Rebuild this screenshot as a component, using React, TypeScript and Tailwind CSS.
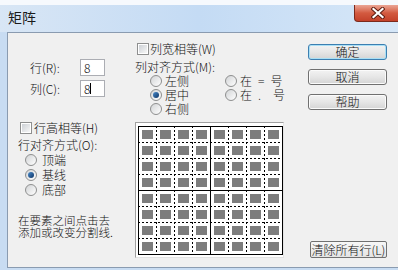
import React from "react";

function Checkbox() {
  return (
    <span className="w-[12px] h-[12px] shrink-0 border border-[#8e8f8f] bg-white p-[1px] flex">
      <span className="flex-1 bg-linear-to-br from-[#cdd1d6] to-[#f7f7f7]" />
    </span>
  );
}

function Radio({ checked }: { checked?: boolean }) {
  return (
    <span className="w-[12px] h-[12px] shrink-0 rounded-full border border-[#8e8f8f] bg-linear-to-br from-[#d2d4d6] to-[#ffffff] flex items-center justify-center">
      {checked && (
        <span className="w-[6px] h-[6px] rounded-full bg-linear-to-br from-[#4a8ccc] to-[#0f3566]" />
      )}
    </span>
  );
}

function RadioRow({ label, checked, h = "h-[15px]", gap = "gap-[5px]" }: { label: React.ReactNode; checked?: boolean; h?: string; gap?: string }) {
  return (
    <div className={`flex items-center ${h} ${gap}`}>
      <Radio checked={checked} />
      <span className="leading-[12px] whitespace-pre">{label}</span>
    </div>
  );
}

function Btn({ label, focused }: { label: string; focused?: boolean }) {
  return (
    <div
      className={
        "w-[79px] h-[16px] rounded-[3px] border flex items-center justify-center text-[12px] leading-none bg-linear-to-b from-[#f3f3f3] via-[#e6e6e6] to-[#d4d4d4] " +
        (focused
          ? "border-[#3c7fb1] shadow-[inset_0_0_0_1px_#a9dff5]"
          : "border-[#707070] shadow-[inset_0_0_0_1px_#fbfbfb]")
      }
    >
      {label}
    </div>
  );
}

function Preview() {
  const els: React.ReactNode[] = [];
  for (let i = 0; i <= 8; i++) {
    const x = i * 18 + 0.5;
    const solid = i % 4 === 0;
    els.push(
      <line key={"v" + i} x1={x} y1={0} x2={x} y2={129} stroke="#000" strokeWidth={1} strokeDasharray={solid ? undefined : "2 2"} />
    );
  }
  for (let j = 0; j <= 8; j++) {
    const y = j * 16 + 0.5;
    const solid = j % 4 === 0;
    els.push(
      <line key={"h" + j} x1={0} y1={y} x2={145} y2={y} stroke="#000" strokeWidth={1} strokeDasharray={solid ? undefined : "2 2"} />
    );
  }
  for (let i = 0; i < 8; i++) {
    for (let j = 0; j < 8; j++) {
      els.push(<rect key={`r${i}-${j}`} x={i * 18 + 4} y={j * 16 + 4} width={11} height={9} fill="#7d7d7d" />);
    }
  }
  return (
    <svg width={145} height={129} viewBox="0 0 145 129" className="block">
      {els}
    </svg>
  );
}

export default function App() {
  return (
    <div className="w-[398px] h-[270px] overflow-hidden bg-[#c8dcf2] flex flex-col font-['Noto_Sans_CJK_SC',sans-serif] font-light text-[12px] text-[#111]">
      <div className="h-[5px] bg-[#f6f9fd] shrink-0" />
      <div className="h-[27px] shrink-0 flex items-start bg-linear-to-r from-[#d8e6f5] via-[#c4dbf4] to-[#d6e7f8]">
        <span className="pl-[8px] pt-[3px] text-[14px] leading-[18px] font-normal text-[#1a1a1a]">矩阵</span>
        <div className="ml-auto mr-[-4px] w-[48px] h-[17px] rounded-bl-[4px] border border-t-0 border-[#7c2a1c] bg-linear-to-b from-[#eaa595] via-[#d35a40] to-[#c3412a] flex items-center justify-center">
          <svg width="14" height="12" viewBox="0 0 14 12">
            <path d="M2.5 2 L11.5 10 M11.5 2 L2.5 10" stroke="#5a1a10" strokeWidth="4" strokeLinecap="square" />
            <path d="M2.5 2 L11.5 10 M11.5 2 L2.5 10" stroke="#ffffff" strokeWidth="2.2" strokeLinecap="square" />
          </svg>
        </div>
      </div>
      <div className="ml-[7px] h-[236px] shrink-0 border-l border-t border-b border-[#8a9bb0] bg-[#f0f0f0] flex">
        {/* left column */}
        <div className="w-[127px] shrink-0 flex flex-col">
          <div className="mt-[26px] flex items-center h-[17px]">
            <span className="ml-[22px] w-[50px] leading-[12px]">行(R):</span>
            <div className="w-[25px] h-[17px] border border-[#abadb3] bg-white pl-[3px] flex items-center leading-[12px]">8</div>
          </div>
          <div className="mt-[4px] flex items-center h-[17px]">
            <span className="ml-[22px] w-[50px] leading-[12px]">列(C):</span>
            <div className="w-[25px] h-[17px] border border-[#abadb3] bg-white pl-[3px] flex items-center leading-[12px]">
              8<span className="w-[1px] h-[11px] bg-black" />
            </div>
          </div>
          <div className="mt-[24px] ml-[12px] flex items-center h-[13px] gap-[2px]">
            <Checkbox />
            <span className="leading-[12px]">行高相等(H)</span>
          </div>
          <div className="mt-[4px] ml-[10px] h-[14px] flex items-center leading-[12px]">行对齐方式(O):</div>
          <div className="ml-[17px] flex flex-col">
            <RadioRow label="顶端" />
            <RadioRow label="基线" checked />
            <RadioRow label="底部" />
          </div>
          <div className="mt-[17px] ml-[10px] leading-[12px] text-[11.5px] flex flex-col gap-[0px]">
            <div className="h-[12px]">在要素之间点击去</div>
            <div className="h-[12px]">添加或改变分割线.</div>
          </div>
        </div>
        {/* middle column */}
        <div className="w-[150px] shrink-0 flex flex-col">
          <div className="mt-[9px] ml-[2px] h-[13px] flex items-center gap-[1px]">
            <Checkbox />
            <span className="leading-[12px]">列宽相等(W)</span>
          </div>
          <div className="mt-[5px] h-[14px] flex items-center leading-[12px]">列对齐方式(M):</div>
          <div className="grid grid-cols-[75px_auto] ml-[15px]">
            <RadioRow label="左侧" h="h-[14px]" gap="gap-[3px]" />
            <RadioRow label={"在\u2002=\u2002号"} h="h-[14px]" gap="gap-[3px]" />
            <RadioRow label="居中" checked h="h-[14px]" gap="gap-[3px]" />
            <RadioRow label={"在\u2002.\u2002\u2002号"} h="h-[14px]" gap="gap-[3px]" />
            <RadioRow label="右侧" h="h-[14px]" gap="gap-[3px]" />
          </div>
          <div className="mt-[6px] w-[149px] border border-t-[#a0a0a0] border-l-[#a0a0a0] border-b-[#e3e3e3] border-r-[#e3e3e3] bg-white pl-[2px] pt-[3px] pb-[2px]">
            <Preview />
          </div>
        </div>
        {/* right column */}
        <div className="flex-1 flex flex-col pl-[23px]">
          <div className="mt-[11px]">
            <Btn label="确定" focused />
          </div>
          <div className="mt-[9px]">
            <Btn label="取消" />
          </div>
          <div className="mt-[9px]">
            <Btn label="帮助" />
          </div>
          <div className="mt-auto mb-[9px] ml-[2px] w-[77px] h-[17px] rounded-[2px] border border-[#707070] bg-linear-to-b from-[#f7f7f7] to-[#e4e4e4] flex items-center justify-center leading-none text-[12px] whitespace-nowrap">
            清除所有行(L)
          </div>
        </div>
      </div>
    </div>
  );
}
